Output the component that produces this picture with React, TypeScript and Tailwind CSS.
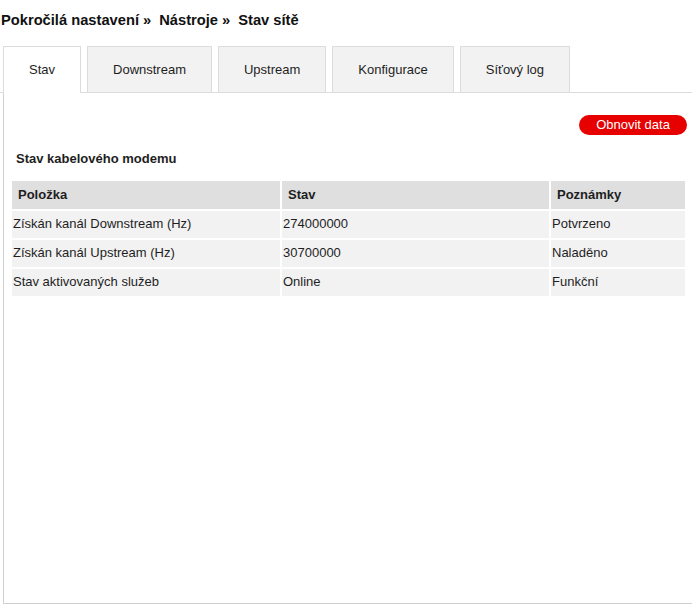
import React from "react";

const tabs = ["Stav", "Downstream", "Upstream", "Konfigurace", "Síťový log"];

const rows = [
  ["Získán kanál Downstream (Hz)", "274000000", "Potvrzeno"],
  ["Získán kanál Upstream (Hz)", "30700000", "Naladěno"],
  ["Stav aktivovaných služeb", "Online", "Funkční"],
];

export default function App() {
  return (
    <div className="w-[692px] h-[604px] overflow-hidden bg-white text-[13px] text-[#1e1e1e] font-['Liberation_Sans',Arial,sans-serif]">
      <div className="h-[46px] pt-[12px] pl-[1px] flex items-start gap-[8px] text-[14.7px] font-bold leading-[17px] text-[#111]">
        <span>Pokročilá nastavení »</span>
        <span>Nástroje »</span>
        <span>Stav sítě</span>
      </div>
      <div className="flex pl-[3px] gap-[6px] h-[47px] border-b border-[#dcdcdc]">
        {tabs.map((t, i) => (
          <div
            key={t}
            className={
              i === 0
                ? "h-[47px] px-[25px] flex items-center bg-white border-l border-t border-r border-[#dcdcdc] relative z-10"
                : "h-[46px] px-[25px] flex items-center bg-[#f2f2f2] border-l border-t border-r border-[#dcdcdc]"
            }
          >
            {t}
          </div>
        ))}
      </div>
      <div className="ml-[3px] h-[511px] border-l border-b border-[#cfcfcf] flex flex-col">
        <div className="flex justify-end pr-[5px] pt-[22px]">
          <button className="h-[20px] w-[108px] rounded-full bg-[#e60000] text-white text-[13px] leading-[20px] flex items-center justify-center">
            Obnovit data
          </button>
        </div>
        <div className="pl-[12px] mt-[16px] font-bold leading-[16px] h-[16px]">Stav kabelového modemu</div>
        <div className="ml-[8px] mt-[14px] grid grid-cols-[268px_267px_134px] gap-x-[2px] gap-y-[2px]">
          <div className="h-[28px] bg-[#dfdfdf] pl-[6px] flex items-center font-bold">Položka</div>
          <div className="h-[28px] bg-[#dfdfdf] pl-[6px] flex items-center font-bold">Stav</div>
          <div className="h-[28px] bg-[#dfdfdf] pl-[6px] flex items-center font-bold">Poznámky</div>
          {rows.map((r) =>
            r.map((c, j) => (
              <div key={r[0] + j} className="h-[27px] bg-[#f2f2f2] pl-[1px] pb-[1px] flex items-center">
                {c}
              </div>
            ))
          )}
        </div>
      </div>
    </div>
  );
}
